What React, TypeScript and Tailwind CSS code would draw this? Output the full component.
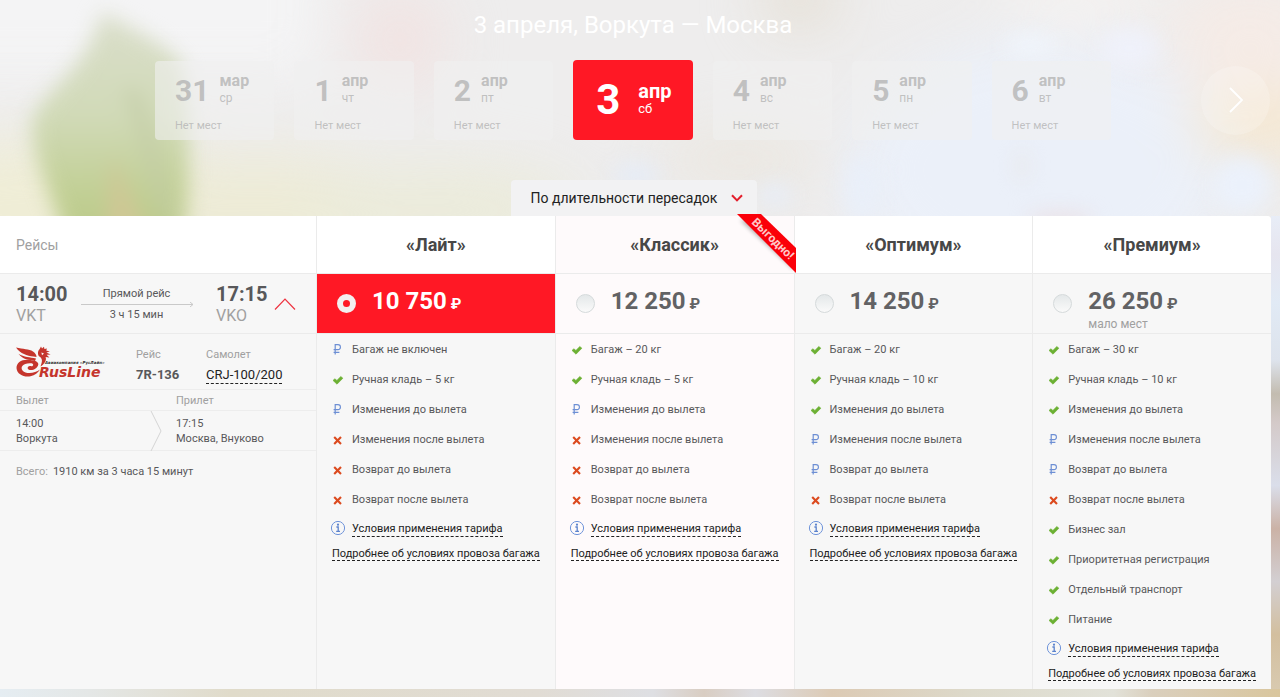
import type { ReactNode } from 'react';

type Mark = 'yes' | 'no' | 'paid';

interface Feature {
  mark: Mark;
  text: string;
}

interface Tariff {
  id: string;
  name: string;
  price: string;
  note?: string;
  best?: boolean;
  features: Feature[];
}

const dates = [
  { day: '31', month: 'мар', week: 'ср' },
  { day: '1', month: 'апр', week: 'чт' },
  { day: '2', month: 'апр', week: 'пт' },
  { day: '3', month: 'апр', week: 'сб', active: true },
  { day: '4', month: 'апр', week: 'вс' },
  { day: '5', month: 'апр', week: 'пн' },
  { day: '6', month: 'апр', week: 'вт' },
];

const tariffs: Tariff[] = [
  {
    id: 'light',
    name: '«Лайт»',
    price: '10 750',
    features: [
      { mark: 'paid', text: 'Багаж не включен' },
      { mark: 'yes', text: 'Ручная кладь – 5 кг' },
      { mark: 'paid', text: 'Изменения до вылета' },
      { mark: 'no', text: 'Изменения после вылета' },
      { mark: 'no', text: 'Возврат до вылета' },
      { mark: 'no', text: 'Возврат после вылета' },
    ],
  },
  {
    id: 'classic',
    name: '«Классик»',
    price: '12 250',
    best: true,
    features: [
      { mark: 'yes', text: 'Багаж – 20 кг' },
      { mark: 'yes', text: 'Ручная кладь – 5 кг' },
      { mark: 'paid', text: 'Изменения до вылета' },
      { mark: 'no', text: 'Изменения после вылета' },
      { mark: 'no', text: 'Возврат до вылета' },
      { mark: 'no', text: 'Возврат после вылета' },
    ],
  },
  {
    id: 'optimum',
    name: '«Оптимум»',
    price: '14 250',
    features: [
      { mark: 'yes', text: 'Багаж – 20 кг' },
      { mark: 'yes', text: 'Ручная кладь – 10 кг' },
      { mark: 'yes', text: 'Изменения до вылета' },
      { mark: 'paid', text: 'Изменения после вылета' },
      { mark: 'paid', text: 'Возврат до вылета' },
      { mark: 'no', text: 'Возврат после вылета' },
    ],
  },
  {
    id: 'premium',
    name: '«Премиум»',
    price: '26 250',
    note: 'мало мест',
    features: [
      { mark: 'yes', text: 'Багаж – 30 кг' },
      { mark: 'yes', text: 'Ручная кладь – 10 кг' },
      { mark: 'yes', text: 'Изменения до вылета' },
      { mark: 'paid', text: 'Изменения после вылета' },
      { mark: 'paid', text: 'Возврат до вылета' },
      { mark: 'no', text: 'Возврат после вылета' },
      { mark: 'yes', text: 'Бизнес зал' },
      { mark: 'yes', text: 'Приоритетная регистрация' },
      { mark: 'yes', text: 'Отдельный транспорт' },
      { mark: 'yes', text: 'Питание' },
    ],
  },
];

function Backdrop() {
  return (
    <svg
      className="absolute inset-0 h-full w-full"
      viewBox="0 0 1280 697"
      preserveAspectRatio="xMidYMid slice"
      aria-hidden="true"
    >
      <defs>
        <filter id="soft" filterUnits="userSpaceOnUse" x="-200" y="-200" width="1680" height="1100" colorInterpolationFilters="sRGB">
          <feGaussianBlur stdDeviation="28" />
        </filter>
        <filter id="leaf" filterUnits="userSpaceOnUse" x="-100" y="-100" width="1480" height="900" colorInterpolationFilters="sRGB">
          <feGaussianBlur stdDeviation="10" />
        </filter>
        <linearGradient id="leafFill" x1="0" y1="0" x2="0" y2="1">
          <stop offset="0" stopColor="#dadecb" />
          <stop offset="0.45" stopColor="#d1dab8" />
          <stop offset="0.8" stopColor="#c1cf94" />
          <stop offset="1" stopColor="#bac988" />
        </linearGradient>
        <linearGradient id="bottomFill" x1="0" y1="0" x2="1" y2="0">
          <stop offset="0" stopColor="#e5edf2" />
          <stop offset="0.07" stopColor="#e4e7e6" />
          <stop offset="0.18" stopColor="#e0dbca" />
          <stop offset="0.42" stopColor="#e1dcd4" />
          <stop offset="0.51" stopColor="#dedfe3" />
          <stop offset="0.55" stopColor="#d9cdc2" />
          <stop offset="0.59" stopColor="#dddde2" />
          <stop offset="0.65" stopColor="#dccab4" />
          <stop offset="0.76" stopColor="#dddacb" />
          <stop offset="0.87" stopColor="#e2e2d9" />
          <stop offset="0.9" stopColor="#dacfbd" />
          <stop offset="1" stopColor="#d9c69e" />
        </linearGradient>
        <linearGradient id="sideFill" gradientUnits="userSpaceOnUse" x1="0" y1="216" x2="0" y2="697">
          <stop offset="0" stopColor="#e8edf7" />
          <stop offset="0.08" stopColor="#e6e5ef" />
          <stop offset="0.18" stopColor="#e1eaf5" />
          <stop offset="0.3" stopColor="#dde3ec" />
          <stop offset="0.37" stopColor="#c3bcb0" />
          <stop offset="0.43" stopColor="#d4cac9" />
          <stop offset="0.56" stopColor="#dadeea" />
          <stop offset="0.65" stopColor="#cbb2a6" />
          <stop offset="0.76" stopColor="#d3cfd2" />
          <stop offset="0.87" stopColor="#d3bf9f" />
          <stop offset="1" stopColor="#d9cbb2" />
        </linearGradient>
      </defs>
      <rect width="1280" height="697" fill="#eeeded" />
      <g filter="url(#soft)">
        <rect x="-100" y="-100" width="420" height="180" fill="#f4f4f5" />
        <ellipse cx="60" cy="210" rx="240" ry="70" fill="#efedd6" />
        <ellipse cx="270" cy="215" rx="160" ry="60" fill="#edebd6" />
        <ellipse cx="400" cy="40" rx="46" ry="50" fill="#f1e3e2" />
        <ellipse cx="440" cy="210" rx="140" ry="44" fill="#ebebda" />
        <ellipse cx="800" cy="0" rx="40" ry="24" fill="#e3dccf" />
        <ellipse cx="740" cy="160" rx="80" ry="30" fill="#ebe7e0" />
        <ellipse cx="1040" cy="170" rx="190" ry="130" fill="#ebf0f9" />
        <ellipse cx="1080" cy="0" rx="80" ry="24" fill="#f6f3f1" />
        <ellipse cx="1250" cy="40" rx="80" ry="60" fill="#f5ebe6" />
        <ellipse cx="1270" cy="125" rx="80" ry="30" fill="#f5e7cf" />
      </g>
      <g filter="url(#leaf)">
        <path d="M102 12C135 30 168 46 182 64C190 120 192 190 182 240L66 240C50 190 32 160 32 122C44 88 84 76 102 12Z" fill="url(#leafFill)" />
        <path d="M112 155L150 240L106 240Z" fill="#cfc795" />
        <path d="M130 90C145 120 150 160 170 220" stroke="#c2cba5" strokeWidth="10" fill="none" />
        <ellipse cx="636" cy="175" rx="24" ry="12" fill="#e6ecf6" />
        <ellipse cx="775" cy="195" rx="18" ry="12" fill="#e8edf6" />
        <ellipse cx="862" cy="190" rx="18" ry="34" fill="#e9eff9" />
        <ellipse cx="1030" cy="45" rx="26" ry="10" fill="#f0f5fc" />
        <ellipse cx="1130" cy="48" rx="30" ry="20" fill="#eff1fa" />
        <ellipse cx="1242" cy="185" rx="30" ry="28" fill="#ebf1fb" />
        <ellipse cx="1022" cy="166" rx="5" ry="16" fill="#e7e6e8" />
        <ellipse cx="1060" cy="220" rx="34" ry="6" fill="#ebdcdf" />
      </g>
      <rect x="1271" y="216" width="9" height="481" fill="url(#sideFill)" />
      <rect y="689" width="1280" height="8" fill="url(#bottomFill)" />
    </svg>
  );
}

function RubleIcon() {
  return (
    <svg className="h-3 w-3" viewBox="0 0 12 12" fill="none" stroke="#6d8fd4" strokeWidth="1.2" aria-hidden="true">
      <path d="M3.2 10.4V0.7H6C9.2 0.7 9.2 5.6 6 5.6H1.6M1.6 8.4H7.4" />
    </svg>
  );
}

function CheckIcon() {
  return (
    <svg className="h-3 w-3" viewBox="0 0 12 12" fill="#6cb033" aria-hidden="true">
      <path d="M1 6.4L2.9 4.8L4.9 6.4L8.8 2.5L10.9 4.2L5 10.2Z" stroke="#6cb033" strokeWidth="0.6" strokeLinejoin="round" />
    </svg>
  );
}

function CrossIcon() {
  return (
    <svg className="h-3 w-3" viewBox="0 0 12 12" fill="none" stroke="#dc4a1e" strokeWidth="2.1" aria-hidden="true">
      <path d="M2.2 3L9 10M9 3L2.2 10" />
    </svg>
  );
}

function InfoIcon() {
  return (
    <svg className="h-4 w-4" viewBox="0 0 16 16" fill="none" aria-hidden="true">
      <circle cx="8" cy="7" r="6.6" stroke="#6f94da" strokeWidth="1" />
      <circle cx="8" cy="3.7" r="1.1" fill="#5b82cd" />
      <path d="M6.4 6H8.2V10.2M6.2 10.4H10" stroke="#5b82cd" strokeWidth="1.3" />
    </svg>
  );
}

function RusLineLogo() {
  return (
    <svg className="h-8 w-[88px] overflow-visible" viewBox="0 0 88 32" role="img" aria-label="RusLine">
      <g fill="#c5352c">
        <path d="M0 1.5C7 3.5 13 2.5 17 5.5C19.5 7.3 20.5 9 20.5 11L17.5 10.6C11 9.6 4.5 8 0 1.5Z" />
        <path d="M2.5 7.8C8 11.4 14 11 20 12.6L19 15C13 13.6 7 14 2.5 7.8Z" />
        <path d="M15.5 14.2C6 12.6 0.5 16.5 0.5 22C1 28.5 8 31.5 14.5 30.3C19 29.4 22 26.5 24 23.5C19 27.5 10 28.5 6.5 24.5C4 21 7 16.5 15.5 17.2C18 17.6 17.5 20.4 15.4 20.2C13 19.6 10.5 21.4 12.2 23.2C15 25.6 21.5 23 22.3 18.5C22.5 15.8 19.5 14.7 15.5 14.2Z" />
        <path d="M23.5 3.2L25 0.5L26 2.6L28 0.8L28.4 3L31 2.4L30.2 4.6L33.8 5.6L30.4 6.6L34.6 8.4L30.6 8.8L33.4 11.4L29.6 11C31 14.6 28 18.5 24.5 20.5C26.6 15.5 26.6 12.6 23.4 10.6C21.6 9 21.4 5.2 23.5 3.2Z" />
      </g>
      <path d="M25.4 6.4L28 7.6L26 9.2Z" fill="#f6f6f6" />
      <text x="29" y="18" fontSize="4" fontWeight="700" fontStyle="italic" fontFamily="'DejaVu Sans', sans-serif" fill="#333333">
        Авиакомпания «РусЛайн»
      </text>
      <text x="23" y="31" fontSize="14" fontWeight="700" fontStyle="italic" fontFamily="'DejaVu Sans', sans-serif" fill="#c5352c">
        RusLine
      </text>
    </svg>
  );
}

function Ribbon() {
  return (
    <svg className="absolute -top-0.5 -right-0.5 h-[60px] w-[60px]" viewBox="0 0 60 60" role="img" aria-label="Выгодно!">
      <defs>
        <filter id="ribbonShadow" x="-20%" y="-20%" width="140%" height="140%">
          <feGaussianBlur stdDeviation="2" />
        </filter>
      </defs>
      <path d="M4 6L22 6L58 42L58 56Z" fill="#000000" opacity="0.3" filter="url(#ribbonShadow)" />
      <path d="M1 0H25L60 34V59Z" fill="#fb0009" />
      <text fontSize="12" fontWeight="700" fontFamily="Roboto, sans-serif" fill="#ffc9c9" transform="translate(15 9) rotate(44)">
        Выгодно!
      </text>
    </svg>
  );
}

const markIcons: Record<Mark, ReactNode> = {
  paid: <RubleIcon />,
  yes: <CheckIcon />,
  no: <CrossIcon />,
};

function DateStrip() {
  return (
    <div className="grid grid-cols-[155fr_956fr_159fr] items-center pr-2.5">
      <div className="col-start-2 grid grid-cols-7 items-end gap-5">
        {dates.map((d) =>
          d.active ? (
            <button
              key={d.day}
              aria-pressed="true"
              className="flex h-20 items-center rounded bg-[#ff1825] pl-[23px] text-left text-white"
            >
              <span className="w-[42px] text-[42px] leading-10 font-bold">{d.day}</span>
              <span className="pb-0.5">
                <span className="block text-xl leading-5 font-bold">{d.month}</span>
                <span className="block text-[13px] leading-4">{d.week}</span>
              </span>
            </button>
          ) : (
            <button
              key={d.day}
              className="flex h-[79px] flex-col rounded bg-[#f0f0f0]/60 pt-2.5 pl-5 text-left text-[#b4b4b4]/80"
            >
              <span className="flex gap-2.5">
                <span className="text-[30px] leading-10 font-bold">{d.day}</span>
                <span>
                  <span className="block text-base leading-5 font-bold">{d.month}</span>
                  <span className="block text-xs leading-3.5">{d.week}</span>
                </span>
              </span>
              <span className="mt-2 block text-[11px] leading-3.5">Нет мест</span>
            </button>
          ),
        )}
      </div>
      <button
        aria-label="Следующие даты"
        className="flex h-[69px] w-[69px] items-center justify-center justify-self-end rounded-full bg-white/20"
      >
        <svg className="h-7 w-4" viewBox="0 0 16 28" fill="none" stroke="#ffffff" strokeWidth="1.8" aria-hidden="true">
          <path d="M2 2L14 14L2 26" />
        </svg>
      </button>
    </div>
  );
}

function FlightSummary() {
  return (
    <div className="flex h-[59px] pt-2 pl-4 text-[#58585a]">
      <div className="w-[65px]">
        <div className="text-xl leading-6 font-bold">14:00</div>
        <div className="text-base leading-5 text-[#a0a0a0]">VKT</div>
      </div>
      <div className="w-[135px] text-[11px] leading-4">
        <div className="w-[111px] pt-1 text-center">Прямой рейс</div>
        <svg className="h-[5px] w-[113px]" viewBox="0 0 113 5" fill="none" stroke="#c9c9c9" aria-hidden="true">
          <path d="M0 2.5H112M109 0L112 2.5L109 5" />
        </svg>
        <div className="w-[111px] text-center">3 ч 15 мин</div>
      </div>
      <div className="w-[58px]">
        <div className="text-xl leading-6 font-bold">17:15</div>
        <div className="text-base leading-5 text-[#a0a0a0]">VKO</div>
      </div>
      <button aria-label="Свернуть" aria-expanded="true" className="flex h-11 items-center">
        <svg className="h-3 w-[22px]" viewBox="0 0 22 12" fill="none" stroke="#ee3340" strokeWidth="1.2" aria-hidden="true">
          <path d="M1 11.5L11 1.2L21 11.5" />
        </svg>
      </button>
    </div>
  );
}

function FlightDetails() {
  return (
    <div className="text-[11px] text-[#58585a]">
      <div className="flex h-14 border-b border-[#ededed] pl-4">
        <div className="w-[120px] pt-3">
          <RusLineLogo />
        </div>
        <div className="w-[70px] pt-3.5">
          <div className="leading-3.5 text-[#a0a0a0]">Рейс</div>
          <div className="mt-[5px] text-[13px] leading-4 font-bold">7R-136</div>
        </div>
        <div className="pt-3.5">
          <div className="leading-3.5 text-[#a0a0a0]">Самолет</div>
          <a href="#aircraft" className="mt-[5px] block border-b border-dashed border-[#222222] text-[13px] leading-4 text-[#222222]">
            CRJ-100/200
          </a>
        </div>
      </div>
      <div className="flex h-[21px] items-end border-b border-[#ededed] pl-4 leading-[18px] text-[#a0a0a0]">
        <div className="w-40">Вылет</div>
        <div>Прилет</div>
      </div>
      <div className="flex h-10 items-center border-b border-[#ededed] pl-4 leading-[15px]">
        <div className="w-[134px]">
          14:00
          <br />
          Воркута
        </div>
        <svg className="mr-3.5 h-10 w-3" viewBox="0 0 12 40" fill="none" stroke="#d4d4d4" aria-hidden="true">
          <path d="M1 0L11 20L1 40" />
        </svg>
        <div>
          17:15
          <br />
          Москва, Внуково
        </div>
      </div>
      <div className="flex gap-[5px] pt-[13px] pl-4 leading-4">
        <span className="text-[#a0a0a0]">Всего:</span>
        <span>1910 км за 3 часа 15 минут</span>
      </div>
    </div>
  );
}

function PriceCell({ tariff, selected }: { tariff: Tariff; selected: boolean }) {
  return (
    <label
      className={
        selected
          ? 'flex h-[59px] cursor-pointer gap-4 bg-[#ff1825] pt-[13px] pl-5 text-white'
          : 'flex h-[59px] cursor-pointer gap-4 pt-[13px] pl-5 text-[#626264]'
      }
    >
      <input
        type="radio"
        name="tariff"
        defaultChecked={selected}
        className="mt-[7px] h-[19px] w-[19px] appearance-none rounded-full border border-[#d5dadb] bg-linear-to-b from-[#e4e8e9] to-[#fafafa] checked:border-6 checked:border-[#f3efef] checked:bg-none"
      />
      <span>
        <span className="flex h-[29px] items-baseline gap-1 leading-7 font-bold">
          <span className="text-2xl leading-7">{tariff.price}</span>
          <span className="text-[15px]">₽</span>
        </span>
        {tariff.note && <span className="block text-xs leading-4 text-[#a0a0a0]">{tariff.note}</span>}
      </span>
    </label>
  );
}

function FeatureCell({ tariff }: { tariff: Tariff }) {
  return (
    <div className="pt-px pb-1 text-[11px] text-[#58585a]">
      <ul>
        {tariff.features.map((f) => (
          <li key={f.text} className="flex h-[30px] items-center gap-2 pl-[15px]">
            {markIcons[f.mark]}
            {f.text}
          </li>
        ))}
      </ul>
      <div className="flex h-7 items-center gap-1.5 pl-[13px] text-[#222222]">
        <InfoIcon />
        <a href="#rules" className="border-b border-dashed border-[#222222] leading-3.5">
          Условия применения тарифа
        </a>
      </div>
      <div className="flex h-[22px] items-center pl-[15px] text-[#222222]">
        <a href="#baggage" className="border-b border-dashed border-[#222222] leading-[13px]">
          Подробнее об условиях провоза багажа
        </a>
      </div>
    </div>
  );
}

export default function App() {
  return (
    <div className="relative min-h-screen bg-[#eeedec] font-[Roboto,sans-serif]">
      <Backdrop />
      <main className="relative pb-2">
        <div className="pr-3.5">
          <h1 className="pt-2 text-center text-2xl leading-[34px] text-white">3 апреля, Воркута — Москва</h1>
        </div>
        <div className="pt-[18px]">
          <DateStrip />
        </div>
        <div className="flex justify-center pt-10 pr-3">
          <button className="flex h-9 items-center gap-3.5 rounded-t bg-[#f2f2f3] pr-3.5 pl-5 text-sm text-[#222222]">
            По длительности пересадок
            <svg className="h-2 w-3" viewBox="0 0 12 8" fill="none" stroke="#e31e2c" strokeWidth="2" aria-hidden="true">
              <path d="M1 1.2L6 6.4L11 1.2" />
            </svg>
          </button>
        </div>
        <div className="pr-[9px]">
          <table className="w-full table-fixed border-separate border-spacing-0 rounded-tr bg-[#f7f7f7] text-left">
            <thead>
              <tr className="h-[58px]">
                <th className="w-[316px] border-b border-[#ebebeb] bg-white pl-4 text-sm font-normal text-[#a0a0a0]">
                  Рейсы
                </th>
                {tariffs.map((t) => (
                  <th
                    key={t.id}
                    className={
                      t.best
                        ? 'relative border-b border-l border-[#ebebeb] bg-[#fefafb] text-center text-lg font-bold text-[#474747]'
                        : 'border-b border-l border-[#ebebeb] bg-white text-center text-lg font-bold text-[#474747] last:rounded-tr'
                    }
                  >
                    {t.name}
                    {t.best && <Ribbon />}
                  </th>
                ))}
              </tr>
            </thead>
            <tbody>
              <tr>
                <td className="border-b border-[#ebebeb] p-0 align-top">
                  <FlightSummary />
                </td>
                {tariffs.map((t, i) => (
                  <td
                    key={t.id}
                    className={
                      t.best
                        ? 'border-b border-l border-[#ebebeb] bg-[#fefafb] p-0 align-top'
                        : 'border-b border-l border-[#ebebeb] p-0 align-top'
                    }
                  >
                    <PriceCell tariff={t} selected={i === 0} />
                  </td>
                ))}
              </tr>
              <tr>
                <td className="p-0 align-top">
                  <FlightDetails />
                </td>
                {tariffs.map((t) => (
                  <td
                    key={t.id}
                    className={
                      t.best
                        ? 'border-l border-[#ebebeb] bg-[#fefafb] p-0 align-top'
                        : 'border-l border-[#ebebeb] p-0 align-top'
                    }
                  >
                    <FeatureCell tariff={t} />
                  </td>
                ))}
              </tr>
            </tbody>
          </table>
        </div>
      </main>
    </div>
  );
}
